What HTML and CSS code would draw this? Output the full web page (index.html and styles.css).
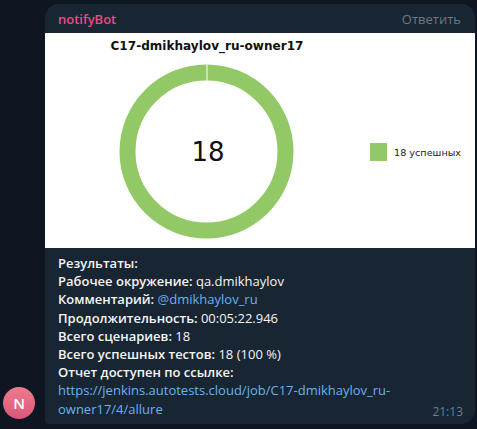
FILE: index.html
```html
<!DOCTYPE html>
<html>
<head>
<meta charset="utf-8">
<link rel="stylesheet" href="styles.css">
</head>
<body>
<div class="row">
  <div class="avatar">N</div>
  <div class="bubble">
    <div class="head">
      <span class="name">notifyBot</span>
      <span class="reply">Ответить</span>
    </div>
    <svg class="chart" width="430" height="215" viewBox="0 0 430 215">
      <rect x="0" y="0" width="430" height="215" fill="#ffffff"/>
      <text x="162" y="17" text-anchor="middle" class="title" textLength="193" lengthAdjust="spacingAndGlyphs">C17-dmikhaylov_ru-owner17</text>
      <circle cx="161.5" cy="118.5" r="79" fill="none" stroke="#92c865" stroke-width="16"/>
      <line x1="162" y1="31" x2="162" y2="48" stroke="#ffffff" stroke-width="1"/>
      <text x="163" y="128" text-anchor="middle" class="num">18</text>
      <rect x="325" y="110" width="17" height="18" fill="#92c865"/>
      <text x="349" y="123" class="leg" textLength="67" lengthAdjust="spacingAndGlyphs">18 успешных</text>
    </svg>
    <div class="body">
      <div><b>Результаты:</b></div>
      <div><b>Рабочее окружение:</b> qa.dmikhaylov</div>
      <div><b>Комментарий:</b> <a class="link">@dmikhaylov_ru</a></div>
      <div><b>Продолжительность:</b> 00:05:22.946</div>
      <div><b>Всего сценариев:</b> 18</div>
      <div><b>Всего успешных тестов:</b> 18 (100 %)</div>
      <div><b>Отчет доступен по ссылке:</b></div>
      <div><a class="link">https://jenkins.autotests.cloud/job/C17-dmikhaylov_ru-<br>owner17/4/allure</a></div>
      <span class="time">21:13</span>
    </div>
  </div>
</div>
</body>
</html>
```
FILE: styles.css
```css
html, body {
  margin: 0;
  padding: 0;
  background: #0e1621;
  width: 477px;
  height: 429px;
  overflow: hidden;
  font-family: "Open Sans", "Liberation Sans", sans-serif;
}
.row {
  display: flex;
  align-items: flex-end;
  padding: 4px 0 0 3px;
  gap: 10px;
}
.avatar {
  width: 32px;
  height: 32px;
  border-radius: 50%;
  background: linear-gradient(180deg, #ee7b8e 0%, #d9577a 100%);
  color: #ffffff;
  font-size: 15px;
  font-weight: 600;
  display: flex;
  align-items: center;
  justify-content: center;
  margin-bottom: 5px;
  flex: none;
}
.bubble {
  width: 430px;
  background: #182533;
  border-radius: 14px 14px 14px 4px;
  overflow: hidden;
  position: relative;
}
.head {
  height: 29px;
  display: flex;
  align-items: center;
  justify-content: space-between;
  padding: 0 14px 0 13px;
  font-size: 13px;
  box-sizing: border-box;
}
.name {
  color: #e94d84;
  font-weight: 600;
}
.reply {
  color: #6c7883;
}
.chart {
  display: block;
}
.title {
  font-family: "DejaVu Sans", sans-serif;
  font-weight: bold;
  font-size: 11.5px;
  fill: #111111;
}
.num {
  font-family: "DejaVu Sans", sans-serif;
  font-size: 26px;
  fill: #111111;
}
.leg {
  font-family: "DejaVu Sans", sans-serif;
  font-size: 9.5px;
  fill: #222222;
}
.body {
  position: relative;
  padding: 6px 13px 6px 13px;
  font-size: 13px;
  line-height: 18.2px;
  color: #f5f5f5;
}
.body b {
  font-weight: 600;
}
.link {
  color: #6ab2f2;
  text-decoration: none;
}
.time {
  position: absolute;
  right: 12px;
  bottom: 3px;
  font-size: 12px;
  color: #6d7f8f;
}
```
